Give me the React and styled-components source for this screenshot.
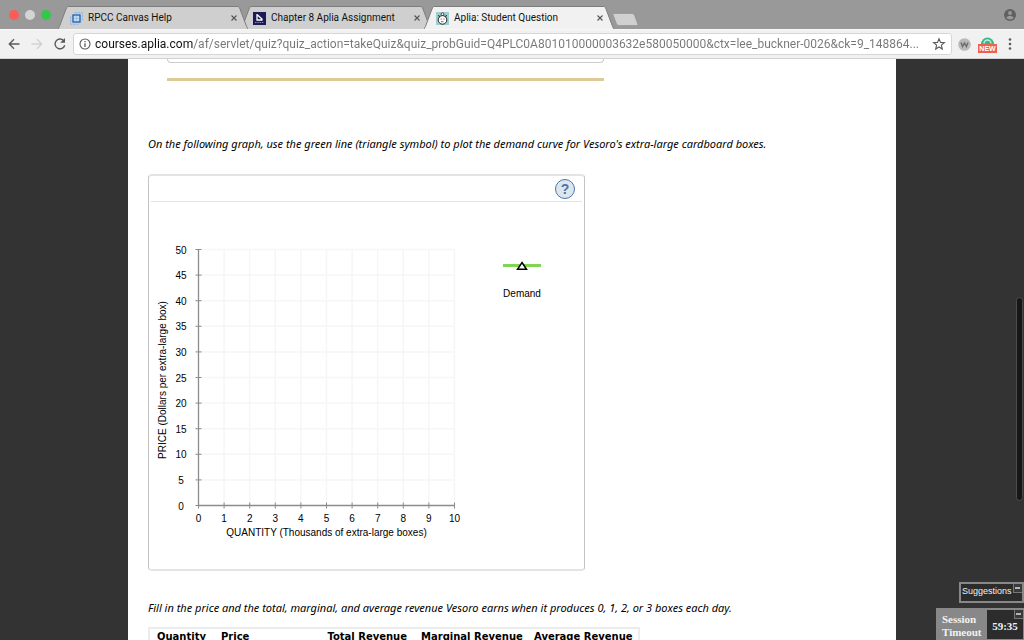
import React from 'react';
import styled, { createGlobalStyle } from 'styled-components';

const COLORS = {
    strip: '#999999',
    tab: '#cfcfcf',
    activeTab: '#f1f1f1',
    tabLine: '#7d7d7d',
    dark: '#333333',
    sand: '#dccb98',
    axis: '#8c8c8c',
    grid: '#f6f6f6',
    green: '#7fd652',
    help: '#4a77a8',
};

const UI_FONT = 'Roboto, Inter, sans-serif';
const BODY_FONT = '"DejaVu Sans", sans-serif';
const ITALIC_FONT = '"Noto Sans", "DejaVu Sans", sans-serif';
const CHART_FONT = '"Liberation Sans", Arial, sans-serif';
const TIMER_FONT = '"Liberation Serif", serif';

const GlobalStyle = createGlobalStyle`
    * {
        box-sizing: border-box;
    }

    body {
        margin: 0;
        background-color: ${COLORS.dark};
    }

    button {
        padding: 0;
        border: 0;
        background: none;
        color: inherit;
        font: inherit;
        cursor: pointer;
    }
`;

const Window = styled.div`
    display: flex;
    flex-direction: column;
    height: 100vh;
    overflow: hidden;
    font-family: ${UI_FONT};
`;

const TabStrip = styled.div`
    display: flex;
    align-items: flex-end;
    flex: none;
    height: 29px;
    padding: 0 8px 0 9px;
    background-color: ${COLORS.strip};
`;

const Lights = styled.div`
    display: flex;
    align-self: center;
    gap: 6px;
    margin-right: 7px;
`;

const Light = styled.button`
    width: 10px;
    height: 10px;
    border-radius: 50%;
    background-color: ${({ $color }) => $color};
`;

const TabWrapper = styled.div`
    display: flex;
    position: relative;
    z-index: ${({ $level }) => $level};
    flex: 0 1 190px;
    min-width: 0;
    height: 23px;
    margin-right: -7px;
`;

const TabEdge = styled.svg`
    flex: none;
    width: 10px;
    height: 23px;
    transform: ${({ $flip }) => ($flip ? 'scaleX(-1)' : 'none')};
`;

const TabBody = styled.div`
    display: flex;
    align-items: center;
    flex: 1;
    gap: 5px;
    min-width: 0;
    padding: 0 0 0 2px;
    border-top: 1px solid ${COLORS.tabLine};
    background-color: ${({ $active }) => ($active ? COLORS.activeTab : COLORS.tab)};
`;

const TabTitle = styled.span`
    flex: 1;
    overflow: hidden;
    white-space: nowrap;
    font-size: 10px;
    line-height: 14px;
    color: #111;
`;

const CloseTab = styled.button`
    display: flex;
`;

const NewTab = styled.button`
    display: flex;
    align-self: center;
    margin: 9px auto 0 5px;
`;

const Profile = styled.button`
    display: flex;
    align-self: center;
`;

const Toolbar = styled.div`
    display: flex;
    align-items: center;
    flex: none;
    gap: 6px;
    height: 30px;
    padding: 0 8px 0 7px;
    border-top: 1px solid #f8f8f8;
    border-bottom: 1px solid #d2d2d2;
    background-color: #f1f1f1;
`;

const ToolGroup = styled.div`
    display: flex;
    align-items: center;
    flex: none;
    gap: ${({ $gap }) => $gap}px;
`;

const ToolButton = styled.button`
    display: flex;
    flex: none;
`;

const AddressBar = styled.div`
    display: flex;
    align-items: center;
    flex: 1;
    gap: 4px;
    min-width: 0;
    height: 22px;
    padding: 0 5px;
    border: 1px solid #d6d6d6;
    border-radius: 3px;
    background-color: #fff;
`;

/* host name is black, the rest of the address is grey */
const Address = styled.input`
    flex: 1;
    min-width: 0;
    padding: 0;
    border: 0;
    outline: 0;
    font-family: ${UI_FONT};
    font-size: 12px;
    line-height: 18px;
    color: transparent;
    background: linear-gradient(to right, #111 98px, #777 98px);
    background-clip: text;
`;

const Viewport = styled.div`
    display: flex;
    flex: 1;
    justify-content: center;
    min-height: 0;
    overflow: hidden;
    background-color: ${COLORS.dark};
`;

const Sheet = styled.main`
    width: 75%;
    padding: 0 20px;
    background-color: #fff;
    font-family: ${BODY_FONT};
    font-size: 10px;
    color: #000;
`;

const PreviousProblem = styled.div`
    width: 437px;
    height: 22px;
    margin-left: 19px;
    border-bottom: 3px solid ${COLORS.sand};
`;

const PreviousBox = styled.div`
    height: 4px;
    border: 1px solid #ccc;
    border-top: 0;
    border-radius: 0 0 4px 4px;
`;

const Instruction = styled.p`
    margin: ${({ $top }) => $top}px 0 0;
    font-family: ${ITALIC_FONT};
    font-size: 11px;
    font-style: italic;
    line-height: 16px;
    white-space: nowrap;
`;

const GraphPanel = styled.section`
    width: 437px;
    margin-top: 22px;
    border: solid;
    border-width: 2px 1px;
    border-color: #e4e4e4 #c4c4c4;
    border-radius: 4px;
`;

const GraphHeader = styled.div`
    display: flex;
    align-items: center;
    justify-content: flex-end;
    height: 26px;
    margin: 0 2px;
    padding-right: 7px;
    border-bottom: 1px solid #e2e2e2;
`;

const HelpButton = styled.button`
    width: 20px;
    height: 20px;
    border: 1px solid ${COLORS.help};
    border-radius: 50%;
    background-color: #dde5ed;
    font-family: ${CHART_FONT};
    font-size: 14px;
    font-weight: bold;
    line-height: 18px;
    color: ${COLORS.help};
`;

const GraphBody = styled.div`
    display: flex;
    gap: 22px;
    height: 367px;
`;

const Chart = styled.svg`
    flex: none;
    font-family: ${CHART_FONT};
    font-size: 10px;
`;

const LegendItem = styled.button`
    display: flex;
    flex-direction: column;
    align-items: center;
    align-self: flex-start;
    gap: 15px;
    margin-top: 58px;
    font-family: ${CHART_FONT};
    font-size: 10px;
    line-height: 14px;
`;

const RevenueTable = styled.table`
    width: 492px;
    margin-top: 11px;
    border: 2px solid #ececec;
    border-collapse: separate;
    border-spacing: 0;
    table-layout: fixed;
`;

const HeadCell = styled.th`
    width: ${({ $width }) => $width}px;
    padding: 1px 7px 0;
    text-align: ${({ $align }) => $align || 'right'};
    font-size: 10px;
    line-height: 14px;
    white-space: nowrap;
`;

const ScrollThumb = styled.div`
    position: fixed;
    top: 297px;
    right: 1px;
    width: 7px;
    height: 204px;
    border: 1px solid #4c4c4c;
    border-radius: 4px;
    background-color: #171717;
`;

const Widgets = styled.aside`
    display: flex;
    position: fixed;
    right: 0;
    bottom: 0;
    flex-direction: column;
    align-items: flex-end;
    gap: 5px;
    color: #f2f2f2;
`;

const Suggestions = styled.div`
    display: flex;
    justify-content: space-between;
    width: 65px;
    height: 21px;
    padding-left: 1px;
    border: 2px solid #888;
    background-color: #2c2c2c;
    font-family: ${CHART_FONT};
    font-size: 9px;
    line-height: 14px;
`;

const Minimize = styled.button`
    display: flex;
    align-self: flex-start;
`;

const Session = styled.div`
    display: flex;
    width: 88px;
    height: 32px;
    background-color: #888;
    font-family: ${TIMER_FONT};
    font-size: 11px;
    font-weight: bold;
`;

const SessionLabel = styled.div`
    width: 51px;
    padding: 5px 0 0 6px;
    line-height: 13px;
`;

const Clock = styled.div`
    display: flex;
    position: relative;
    align-items: center;
    justify-content: center;
    flex: 1;
    margin: 2px 1px 1px 0;
    padding-top: 3px;
    background-color: #2c2c2c;
`;

const ClockMinimize = styled(Minimize)`
    position: absolute;
    top: 0;
    right: 0;
`;

const CanvasIcon = () => (
    <svg width="13" height="13" viewBox="0 0 13 13" fill="none">
        <path d="M4.500 .7H12.300V8.500M.7 4.500V12.300H8.500" stroke="#8db7e6" strokeDasharray="2.500 .8" />
        <rect x="3" y="3" width="7" height="7" fill="#c3d9f1" stroke="#1d5fae" strokeWidth="1.300" />
        <path d="M4.500 6.500H8.500M6.500 4.500V8.500" stroke="#8db7e6" strokeWidth=".7" />
    </svg>
);

const ChapterIcon = () => (
    <svg width="13" height="13" viewBox="0 0 13 13" fill="none">
        <rect width="13" height="13" fill="#1c1a57" />
        <path d="M4 2v6h5.500M4.500 3l5 4.500" stroke="#fff" strokeWidth="1.300" />
        <path d="M2 10.500h9" stroke="#8d8cb5" strokeDasharray="1.500 .8" />
    </svg>
);

const ApliaIcon = () => (
    <svg width="13" height="13" viewBox="0 0 13 13" fill="none">
        <rect width="13" height="13" fill="#9fcdd0" />
        <circle cx="6.500" cy="2.200" r="1.400" fill="#fff" stroke="#222" strokeWidth=".8" />
        <circle cx="6.500" cy="7.900" r="4.300" fill="#fff" stroke="#222" />
        <path d="M2 3.500l2 1M11 3.500l-2 1" stroke="#222" />
        <path d="M5.200 6.500v1.200M8 6.500v1.200M5 9.700h2.500" stroke="#444" strokeWidth=".8" />
    </svg>
);

const MinimizeIcon = () => (
    <svg width="9" height="9" viewBox="0 0 9 9">
        <rect width="9" height="9" fill="#777" />
        <rect x="1" width="8" height="8" fill="#3a3a3a" />
        <rect x="2" y="3" width="5" height="2" fill="#b5b5b5" />
    </svg>
);

const TABS = [
    { title: 'RPCC Canvas Help', Icon: CanvasIcon, level: 2 },
    { title: 'Chapter 8 Aplia Assignment', Icon: ChapterIcon, level: 1 },
    { title: 'Aplia: Student Question', Icon: ApliaIcon, level: 3, active: true },
];

const Tab = ({ title, Icon, level, active }) => {
    const fill = active ? COLORS.activeTab : COLORS.tab;
    const slope = 'M0 23C1 22 1 21 2 19L8 3C9 1 9 .5 10 .5';

    return (
        <TabWrapper $level={level}>
            <TabEdge viewBox="0 0 10 23">
                <path d={`${slope}V23Z`} fill={fill} />
                <path d={slope} fill="none" stroke={COLORS.tabLine} />
            </TabEdge>
            <TabBody $active={active}>
                <Icon />
                <TabTitle>{title}</TabTitle>
                <CloseTab aria-label={`Close ${title}`}>
                    <svg width="8" height="8" viewBox="0 0 8 8">
                        <path d="M1.500 1.500l5 5M6.500 1.500l-5 5" stroke="#555" strokeWidth="1.100" />
                    </svg>
                </CloseTab>
            </TabBody>
            <TabEdge viewBox="0 0 10 23" $flip>
                <path d={`${slope}V23Z`} fill={fill} />
                <path d={slope} fill="none" stroke={COLORS.tabLine} />
            </TabEdge>
        </TabWrapper>
    );
};

const STEPS = [0, 1, 2, 3, 4, 5, 6, 7, 8, 9, 10];
const PLOT = { left: 49.5, top: 47.5, size: 256 };

const DemandChart = () => {
    const bottom = PLOT.top + PLOT.size;
    const right = PLOT.left + PLOT.size;
    const x = (step) => PLOT.left + (step * PLOT.size) / 10;
    const y = (step) => bottom - (step * PLOT.size) / 10;

    return (
        <Chart width="331" height="350" role="img" aria-label="Demand graph">
            {STEPS.slice(1).map((step) => (
                <g key={step} stroke={COLORS.grid} strokeWidth="1.5">
                    <line x1={x(step)} x2={x(step)} y1={PLOT.top} y2={bottom} />
                    <line x1={PLOT.left} x2={right} y1={y(step)} y2={y(step)} />
                </g>
            ))}
            <g stroke={COLORS.axis}>
                <path d={`M${PLOT.left} ${PLOT.top}V${bottom}H${right}`} fill="none" strokeWidth="1.3" />
                {STEPS.map((step) => (
                    <g key={step}>
                        <line x1={PLOT.left - 3} x2={PLOT.left + 3} y1={y(step)} y2={y(step)} />
                        <line x1={x(step)} x2={x(step)} y1={bottom - 3} y2={bottom + 3} />
                    </g>
                ))}
            </g>
            {STEPS.map((step) => (
                <g key={step} textAnchor="middle">
                    <text x="32" y={y(step) + 4}>{step * 5}</text>
                    <text x={x(step)} y={bottom + 16}>{step}</text>
                </g>
            ))}
            <text x={PLOT.left + PLOT.size / 2} y={bottom + 30} textAnchor="middle">
                QUANTITY (Thousands of extra-large boxes)
            </text>
            <text transform="translate(17 178) rotate(-90)" textAnchor="middle">
                PRICE (Dollars per extra-large box)
            </text>
        </Chart>
    );
};

export default function App() {
    return (
        <Window>
            <GlobalStyle />
            <TabStrip>
                <Lights>
                    <Light $color="#fc5b57" aria-label="Close window" />
                    <Light $color="#d4d4d4" aria-label="Minimize window" />
                    <Light $color="#34c84a" aria-label="Zoom window" />
                </Lights>
                {TABS.map((tab) => <Tab key={tab.title} {...tab} />)}
                <NewTab aria-label="New tab">
                    <svg width="27" height="13" viewBox="0 0 27 13">
                        <path d="M1.500 .5H20Q22 .5 22.500 2L26 12Q26 12.500 25.500 12.500H7Q5 12.500 4.500 11L1 1.500Q1 .5 1.500 .5Z" fill="#d0d0d0" stroke="#8d8d8d" strokeWidth=".6" />
                    </svg>
                </NewTab>
                <Profile aria-label="Profile">
                    <svg width="12" height="12" viewBox="0 0 12 12">
                        <circle cx="6" cy="6" r="6" fill="#606060" />
                        <circle cx="6" cy="4" r="1.900" fill="#999" />
                        <path d="M2.300 8.700C3 6.300 9 6.300 9.700 8.700C8 11 4 11 2.300 8.700Z" fill="#999" />
                    </svg>
                </Profile>
            </TabStrip>
            <Toolbar>
                <ToolGroup $gap={9}>
                    <ToolButton aria-label="Back">
                        <svg width="14" height="14" viewBox="0 0 14 14" fill="none" stroke="#5a5a5a" strokeWidth="1.400">
                            <path d="M12.500 7H2.500M7 2.300L2.300 7L7 11.700" />
                        </svg>
                    </ToolButton>
                    <ToolButton aria-label="Forward">
                        <svg width="14" height="14" viewBox="0 0 14 14" fill="none" stroke="#d2d2d2" strokeWidth="1.400">
                            <path d="M1.500 7H11.500M7 2.300L11.700 7L7 11.700" />
                        </svg>
                    </ToolButton>
                    <ToolButton aria-label="Reload">
                        <svg width="14" height="14" viewBox="0 0 14 14" fill="none" stroke="#5a5a5a" strokeWidth="1.400">
                            <path d="M10.500 3.500A4.900 4.900 0 1 0 11.700 8.200" />
                            <path d="M12 1V5.800H7.200Z" fill="#5a5a5a" stroke="none" />
                        </svg>
                    </ToolButton>
                </ToolGroup>
                <AddressBar>
                    <svg width="12" height="12" viewBox="0 0 12 12" fill="none" stroke="#5a5a5a">
                        <circle cx="6" cy="6" r="5" strokeWidth="1.100" />
                        <path d="M6 5.200V9M6 3V4.300" strokeWidth="1.300" />
                    </svg>
                    <Address
                        aria-label="Address"
                        spellCheck="false"
                        defaultValue="courses.aplia.com/af/servlet/quiz?quiz_action=takeQuiz&quiz_probGuid=Q4PLC0A801010000003632e580050000&ctx=lee_buckner-0026&ck=9_148864..."
                    />
                    <ToolButton aria-label="Bookmark this page">
                        <svg width="14" height="14" viewBox="0 0 14 14" fill="none">
                            <path d="M7 1.800L8.500 5.400L12.400 5.700L9.400 8.200L10.300 12L7 10L3.700 12L4.600 8.200L1.600 5.700L5.500 5.400Z" stroke="#5a5a5a" strokeWidth="1.100" />
                        </svg>
                    </ToolButton>
                </AddressBar>
                <ToolGroup $gap={7}>
                    <ToolButton aria-label="W extension">
                        <svg width="13" height="13" viewBox="0 0 13 13">
                            <circle cx="6.500" cy="6.500" r="6.300" fill="#b9b9b9" />
                            <path d="M3 4.500L4.600 8.500L6.500 5L8.400 8.500L10 4.500" fill="none" stroke="#6e6e6e" strokeWidth="1.500" />
                        </svg>
                    </ToolButton>
                    <ToolButton aria-label="New extension">
                        <svg width="19" height="17" viewBox="0 0 19 17">
                            <path d="M3 8A6.500 6.500 0 0 1 16 8Z" fill="#35b988" />
                            <path d="M6 7.500A3.500 3.500 0 0 1 13 7.500" fill="none" stroke="#c9eddf" strokeWidth="1.300" />
                            <rect y="8" width="19" height="9" fill="#ee6150" />
                            <text x="9.500" y="15" fill="#fff" fontFamily={CHART_FONT} fontSize="7" fontWeight="bold" textAnchor="middle">NEW</text>
                        </svg>
                    </ToolButton>
                    <ToolButton aria-label="Menu">
                        <svg width="12" height="12" viewBox="0 0 12 12" fill="#5a5a5a">
                            <circle cx="6" cy="1.500" r="1.300" />
                            <circle cx="6" cy="6" r="1.300" />
                            <circle cx="6" cy="10.500" r="1.300" />
                        </svg>
                    </ToolButton>
                </ToolGroup>
            </Toolbar>
            <Viewport>
                <Sheet>
                    <PreviousProblem>
                        <PreviousBox />
                    </PreviousProblem>
                    <Instruction $top={55}>
                        On the following graph, use the green line (triangle symbol) to plot the demand curve for Vesoro's extra-large cardboard boxes.
                    </Instruction>
                    <GraphPanel>
                        <GraphHeader>
                            <HelpButton aria-label="Help">?</HelpButton>
                        </GraphHeader>
                        <GraphBody>
                            <DemandChart />
                            <LegendItem>
                                <svg width="40" height="12" viewBox="0 0 40 12">
                                    <rect x="1" y="4" width="38" height="3" fill={COLORS.green} />
                                    <path d="M20 2.500L24.500 9.300H15.500Z" fill="#fff" stroke="#000" strokeWidth="1.500" />
                                </svg>
                                Demand
                            </LegendItem>
                        </GraphBody>
                    </GraphPanel>
                    <Instruction $top={29}>
                        Fill in the price and the total, marginal, and average revenue Vesoro earns when it produces 0, 1, 2, or 3 boxes each day.
                    </Instruction>
                    <RevenueTable>
                        <thead>
                            <tr>
                                <HeadCell $width={64} $align="left">Quantity</HeadCell>
                                <HeadCell $width={90} $align="left">Price</HeadCell>
                                <HeadCell $width={110}>Total Revenue</HeadCell>
                                <HeadCell $width={113}>Marginal Revenue</HeadCell>
                                <HeadCell $width={111}>Average Revenue</HeadCell>
                            </tr>
                        </thead>
                    </RevenueTable>
                </Sheet>
            </Viewport>
            <ScrollThumb />
            <Widgets>
                <Suggestions>
                    Suggestions
                    <Minimize aria-label="Minimize suggestions"><MinimizeIcon /></Minimize>
                </Suggestions>
                <Session>
                    <SessionLabel>Session Timeout</SessionLabel>
                    <Clock>
                        59:35
                        <ClockMinimize aria-label="Minimize timer"><MinimizeIcon /></ClockMinimize>
                    </Clock>
                </Session>
            </Widgets>
        </Window>
    );
}
